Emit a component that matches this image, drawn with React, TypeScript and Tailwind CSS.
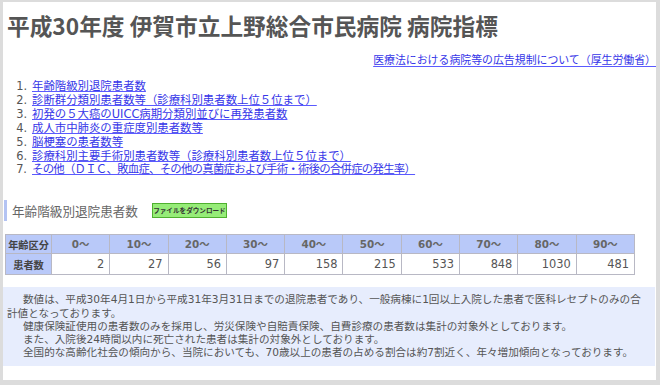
import React from "react";

const ages = ["0～", "10～", "20～", "30～", "40～", "50～", "60～", "70～", "80～", "90～"];
const counts = [2, 27, 56, 97, 158, 215, 533, 848, 1030, 481];

const items = [
  "年齢階級別退院患者数",
  "診断群分類別患者数等（診療科別患者数上位５位まで）",
  "初発の５大癌のUICC病期分類別並びに再発患者数",
  "成人市中肺炎の重症度別患者数等",
  "脳梗塞の患者数等",
  "診療科別主要手術別患者数等（診療科別患者数上位５位まで）",
];

export default function App() {
  return (
    <div className="w-[660px] h-[385px] bg-[#dcdcdc] pt-[2px] pl-[3px] pr-[4px] pb-[5px] font-['DejaVu_Sans','Noto_Sans_CJK_JP',sans-serif] overflow-hidden">
      <div className="bg-white h-full flex flex-col">
        <h1 className="font-['Noto_Sans_CJK_JP',sans-serif] text-[22.7px] font-bold text-[#555] pl-[4px] pt-[9px] leading-[30px] whitespace-nowrap">
          平成30年度 伊賀市立上野総合市民病院 病院指標
        </h1>
        <div className="flex justify-end mt-[13px]">
          <a className="text-[10.9px] leading-[14px] text-[#3636e8] underline decoration-[#5a5aff] underline-offset-2 whitespace-nowrap">
            医療法における病院等の広告規制について（厚生労働省）
          </a>
        </div>
        <ol className="mt-[12px]">
          {items.map((t, i) => (
            <li key={i} className="flex text-[11.4px] leading-[13.9px] whitespace-nowrap">
              <span className="w-[24px] text-right text-[#555]">{i + 1}.</span>
              <a className="ml-[5px] text-[#3636e8] underline decoration-[#5a5aff] underline-offset-1">{t}</a>
            </li>
          ))}
          <li className="flex text-[11.4px] leading-[13.9px] whitespace-nowrap">
            <span className="w-[24px] text-right text-[#555]">7.</span>
            <a className="ml-[5px] text-[#3636e8] underline decoration-[#5a5aff] underline-offset-1 tracking-[-0.75px]">
              その他（ＤＩＣ、敗血症、その他の真菌症および手術・術後の合併症の発生率）
            </a>
          </li>
        </ol>
        <div className="mt-[23px] ml-[1px] flex items-center h-[21px]">
          <div className="border-l-[3px] border-[#b3c3f3] h-full flex items-center pl-[5px]">
            <span className="text-[12.6px] text-[#666] leading-[20px] pt-[2px]">年齢階級別退院患者数</span>
          </div>
          <div className="ml-[14px] w-[75px] h-[15px] bg-[#96ec78] border border-[#4fb02f] flex items-center justify-center text-[6.6px] font-bold text-[#333] leading-none whitespace-nowrap">
            ファイルをダウンロード
          </div>
        </div>
        <table className="mt-[13px] ml-[2px] w-[630px] table-fixed border-collapse border border-[#b8b8c4] text-[#555]">
          <colgroup>
            <col className="w-[46px]" />
            {ages.map((a) => (
              <col key={a} />
            ))}
          </colgroup>
          <thead>
            <tr className="h-[19px]">
              <th className="bg-[#b9c9f9] border border-[#b8b8c4] text-[10.2px] font-bold text-[#444] font-['Noto_Sans_CJK_JP',sans-serif] p-0">年齢区分</th>
              {ages.map((a) => (
                <th key={a} className="bg-[#b9c9f9] border border-[#b8b8c4] text-[10.4px] font-bold text-[#666] p-0">
                  {a}
                </th>
              ))}
            </tr>
          </thead>
          <tbody>
            <tr className="h-[21px]">
              <th className="bg-[#b9c9f9] border border-[#b8b8c4] text-[10.2px] font-bold text-[#444] font-['Noto_Sans_CJK_JP',sans-serif] p-0">患者数</th>
              {counts.map((c, i) => (
                <td key={i} className="bg-white border border-[#b8b8c4] text-right pr-[5px] text-[11.4px] text-[#555]">
                  {c}
                </td>
              ))}
            </tr>
          </tbody>
        </table>
        <div className="mt-[12px] mr-[1px] bg-[#e7edfd] pl-[4px] pt-[6px] pb-[7px] text-[10.6px] leading-[13.2px] text-[#555] whitespace-nowrap">
          <p className="indent-[16px]">
            数値は、平成30年4月1日から平成31年3月31日までの退院患者であり、一般病棟に1回以上入院した患者で医科レセプトのみの合
            <br />
            計値となっております。
          </p>
          <p className="indent-[16px]">健康保険証使用の患者数のみを採用し、労災保険や自賠責保険、自費診療の患者数は集計の対象外としております。</p>
          <p className="indent-[16px]">また、入院後24時間以内に死亡された患者は集計の対象外としております。</p>
          <p className="indent-[16px]">全国的な高齢化社会の傾向から、当院においても、70歳以上の患者の占める割合は約7割近く、年々増加傾向となっております。</p>
        </div>
      </div>
    </div>
  );
}
